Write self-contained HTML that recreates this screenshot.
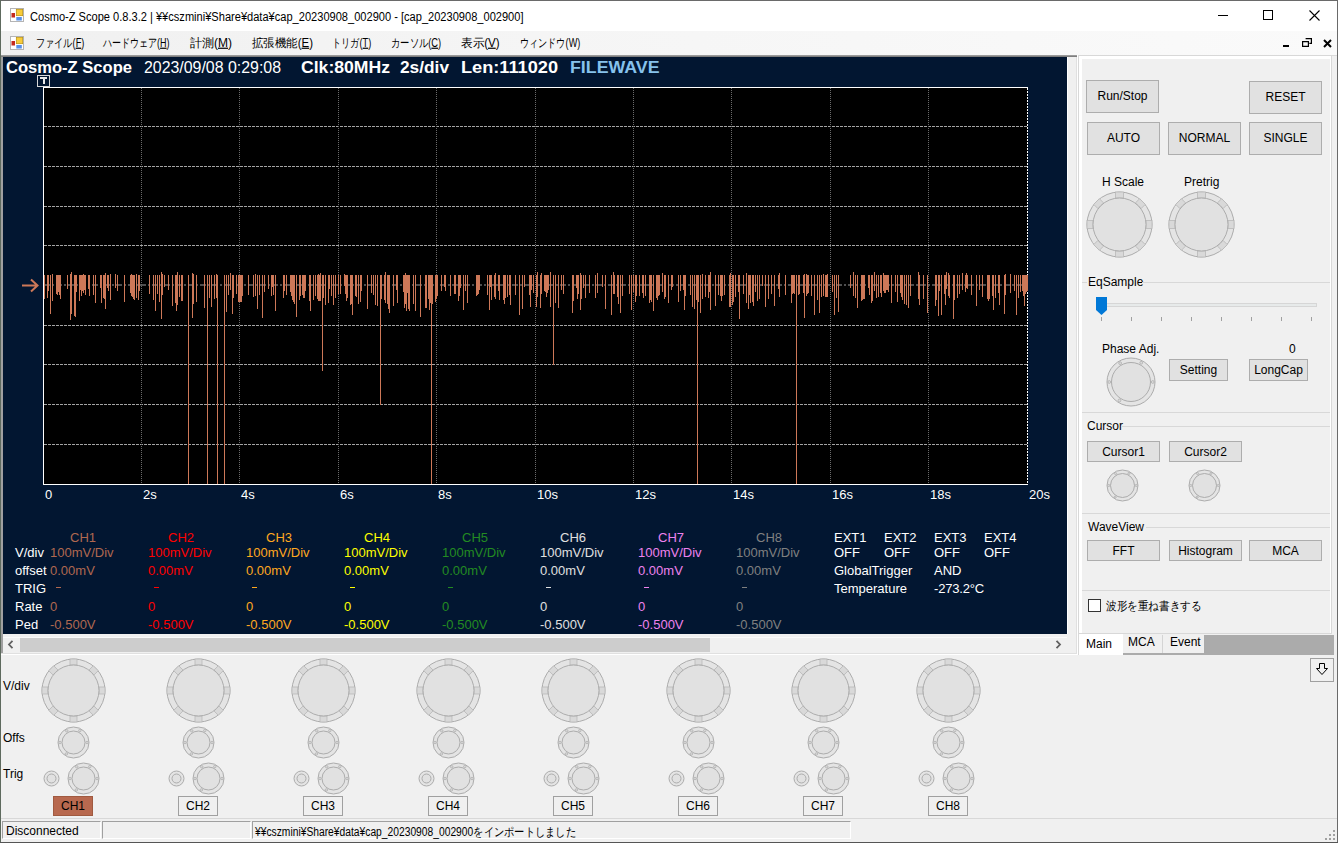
<!DOCTYPE html><html><head><meta charset="utf-8"><style>
*{margin:0;padding:0;box-sizing:border-box}
html,body{width:1338px;height:843px;overflow:hidden;background:#f0f0f0;font-family:"Liberation Sans",sans-serif;position:relative}
.a{position:absolute;white-space:nowrap}
.b{position:absolute;background:#e1e1e1;border:1px solid #adadad}
</style></head><body>
<div class="a" style="left:0;top:0;width:1338px;height:1px;background:#6a6a6a"></div>
<div class="a" style="left:0;top:0;width:1px;height:843px;background:#5e6a5e"></div>
<div class="a" style="left:1337px;top:0;width:1px;height:843px;background:#6a6a6a"></div>
<div class="a" style="left:0;top:842px;width:1338px;height:1px;background:#555"></div>
<div class="a" style="left:1px;top:1px;width:1336px;height:30px;background:#fff"></div>
<svg class="a" style="left:10px;top:8px" width="14" height="14" viewBox="0 0 14 14"><rect x="0.5" y="0.5" width="13" height="13" fill="#fff" stroke="#b4b4b4"/><rect x="6.3" y="1.3" width="6.4" height="6.4" fill="#f8cc3a" stroke="#b8900c" stroke-width="0.7"/><rect x="1.5" y="5" width="3.5" height="4.5" fill="#c42a1e"/><rect x="6.3" y="9" width="5.5" height="3.5" fill="#5690e8"/></svg>
<svg class="a" style="left:30px;top:9px;overflow:visible" width="493.5" height="15"><text x="0" y="11.66" font-family="Liberation Sans, sans-serif" font-size="12" fill="#000" textLength="493.50" lengthAdjust="spacingAndGlyphs">Cosmo-Z Scope 0.8.3.2 | ¥¥cszmini¥Share¥data¥cap_20230908_002900 - [cap_20230908_002900]</text></svg>
<div class="a" style="left:1218px;top:15px;width:10px;height:1px;background:#000"></div>
<div class="a" style="left:1263px;top:10px;width:10px;height:10px;border:1px solid #000"></div>
<svg class="a" style="left:1309px;top:10px" width="11" height="11"><path d="M0.5 0.5L10.5 10.5M10.5 0.5L0.5 10.5" stroke="#000" stroke-width="1.1"/></svg>
<div class="a" style="left:1px;top:31px;width:1336px;height:24px;background:linear-gradient(90deg,#f0f0f0,#f5f5f5 40%,#fafafa)"></div>
<svg class="a" style="left:10px;top:36px" width="14" height="14" viewBox="0 0 14 14"><rect x="0.5" y="0.5" width="13" height="13" fill="#fff" stroke="#b4b4b4"/><rect x="6.3" y="1.3" width="6.4" height="6.4" fill="#f8cc3a" stroke="#b8900c" stroke-width="0.7"/><rect x="1.5" y="5" width="3.5" height="4.5" fill="#c42a1e"/><rect x="6.3" y="9" width="5.5" height="3.5" fill="#5690e8"/></svg>
<svg class="a" style="left:35.6px;top:35px;overflow:visible" width="48.3" height="15"><text x="0" y="11.66" font-family="Liberation Sans, sans-serif" font-size="12" fill="#000" textLength="48.30" lengthAdjust="spacingAndGlyphs">ファイル(<tspan text-decoration="underline">F</tspan>)</text></svg>
<svg class="a" style="left:102.9px;top:35px;overflow:visible" width="66.6" height="15"><text x="0" y="11.66" font-family="Liberation Sans, sans-serif" font-size="12" fill="#000" textLength="66.60" lengthAdjust="spacingAndGlyphs">ハードウェア(<tspan text-decoration="underline">H</tspan>)</text></svg>
<svg class="a" style="left:189.6px;top:35px;overflow:visible" width="42.0" height="15"><text x="0" y="11.66" font-family="Liberation Sans, sans-serif" font-size="12" fill="#000" textLength="42.00" lengthAdjust="spacingAndGlyphs">計測(<tspan text-decoration="underline">M</tspan>)</text></svg>
<svg class="a" style="left:251.5px;top:35px;overflow:visible" width="61.0" height="15"><text x="0" y="11.66" font-family="Liberation Sans, sans-serif" font-size="12" fill="#000" textLength="61.00" lengthAdjust="spacingAndGlyphs">拡張機能(<tspan text-decoration="underline">E</tspan>)</text></svg>
<svg class="a" style="left:332.3px;top:35px;overflow:visible" width="39.3" height="15"><text x="0" y="11.66" font-family="Liberation Sans, sans-serif" font-size="12" fill="#000" textLength="39.30" lengthAdjust="spacingAndGlyphs">トリガ(<tspan text-decoration="underline">T</tspan>)</text></svg>
<svg class="a" style="left:391.3px;top:35px;overflow:visible" width="50.2" height="15"><text x="0" y="11.66" font-family="Liberation Sans, sans-serif" font-size="12" fill="#000" textLength="50.20" lengthAdjust="spacingAndGlyphs">カーソル(<tspan text-decoration="underline">C</tspan>)</text></svg>
<svg class="a" style="left:461.3px;top:35px;overflow:visible" width="38.6" height="15"><text x="0" y="11.66" font-family="Liberation Sans, sans-serif" font-size="12" fill="#000" textLength="38.60" lengthAdjust="spacingAndGlyphs">表示(<tspan text-decoration="underline">V</tspan>)</text></svg>
<svg class="a" style="left:519.6px;top:35px;overflow:visible" width="60.3" height="15"><text x="0" y="11.66" font-family="Liberation Sans, sans-serif" font-size="12" fill="#000" textLength="60.30" lengthAdjust="spacingAndGlyphs">ウィンドウ(W)</text></svg>
<div class="a" style="left:1283px;top:45px;width:6px;height:2px;background:#000"></div>
<svg class="a" style="left:1302px;top:38px" width="10" height="9"><path d="M3.6 0.6H9.4V5.4H7.4M0.6 3.6H6.4V8.4H0.6Z" fill="none" stroke="#000" stroke-width="1.2"/></svg>
<svg class="a" style="left:1323px;top:39px" width="9" height="9"><path d="M1 1L8 8M8 1L1 8" stroke="#000" stroke-width="2"/></svg>
<div class="a" style="left:1px;top:55px;width:1336px;height:1px;background:#dadada"></div>
<div class="a" style="left:1px;top:55px;width:2px;height:599px;background:#a0a0a0"></div>
<div class="a" style="left:1px;top:55px;width:1076px;height:2px;background:linear-gradient(180deg,#a8a8a8,#707070)"></div>
<div class="a" style="left:1067px;top:57px;width:1px;height:577px;background:#fff"></div>
<div class="a" style="left:1076px;top:57px;width:1px;height:597px;background:#e0e0e0"></div>
<div class="a" style="left:1px;top:653px;width:1076px;height:1px;background:#e0e0e0"></div>
<div class="a" style="left:1px;top:654px;width:1077px;height:1px;background:#fff"></div>
<div class="a" style="left:3px;top:57px;width:1064px;height:577px;background:#021631"></div>
<svg class="a" style="left:6px;top:58px;overflow:visible" width="126.0" height="19"><text x="0" y="15.04" font-family="Liberation Sans, sans-serif" font-size="16" font-weight="bold" fill="#fff" textLength="126.00" lengthAdjust="spacingAndGlyphs">Cosmo-Z Scope</text></svg>
<svg class="a" style="left:144px;top:58px;overflow:visible" width="137.0" height="19"><text x="0" y="15.04" font-family="Liberation Sans, sans-serif" font-size="16" fill="#fff" textLength="137.00" lengthAdjust="spacingAndGlyphs">2023/09/08 0:29:08</text></svg>
<svg class="a" style="left:300.5px;top:58px;overflow:visible" width="89.0" height="19"><text x="0" y="15.04" font-family="Liberation Sans, sans-serif" font-size="16" font-weight="bold" fill="#fff" textLength="89.00" lengthAdjust="spacingAndGlyphs">Clk:80MHz</text></svg>
<svg class="a" style="left:400px;top:58px;overflow:visible" width="49.0" height="19"><text x="0" y="15.04" font-family="Liberation Sans, sans-serif" font-size="16" font-weight="bold" fill="#fff" textLength="49.00" lengthAdjust="spacingAndGlyphs">2s/div</text></svg>
<svg class="a" style="left:461px;top:58px;overflow:visible" width="97.0" height="19"><text x="0" y="15.04" font-family="Liberation Sans, sans-serif" font-size="16" font-weight="bold" fill="#fff" textLength="97.00" lengthAdjust="spacingAndGlyphs">Len:111020</text></svg>
<svg class="a" style="left:570px;top:58px;overflow:visible" width="89.5" height="19"><text x="0" y="15.04" font-family="Liberation Sans, sans-serif" font-size="16" font-weight="bold" fill="#86c2ec" textLength="89.50" lengthAdjust="spacingAndGlyphs">FILEWAVE</text></svg>
<div class="a" style="left:37px;top:75px;width:13px;height:12px;border:1px solid #d8d8d8;background:#021631"></div>
<div class="a" style="left:40px;top:77px;width:7px;height:2px;background:#e8e8e8"></div>
<div class="a" style="left:42.5px;top:77px;width:2px;height:7px;background:#e8e8e8"></div>
<svg class="a" style="left:0;top:0" width="1067" height="634"><rect x="43" y="87" width="985" height="398" fill="#000"/><path d="M44 126.5H1027" stroke="#a4a4a4" stroke-width="1" stroke-dasharray="3 1"/><path d="M44 166.5H1027" stroke="#a4a4a4" stroke-width="1" stroke-dasharray="3 1"/><path d="M44 206.5H1027" stroke="#a4a4a4" stroke-width="1" stroke-dasharray="3 1"/><path d="M44 245.5H1027" stroke="#a4a4a4" stroke-width="1" stroke-dasharray="3 1"/><path d="M44 285H1027" stroke="#4e4e4e" stroke-width="2" stroke-dasharray="6 2 2 2"/><path d="M44 325.5H1027" stroke="#a4a4a4" stroke-width="1" stroke-dasharray="3 1"/><path d="M44 364.5H1027" stroke="#a4a4a4" stroke-width="1" stroke-dasharray="3 1"/><path d="M44 404.5H1027" stroke="#a4a4a4" stroke-width="1" stroke-dasharray="3 1"/><path d="M44 444.5H1027" stroke="#a4a4a4" stroke-width="1" stroke-dasharray="3 1"/><path d="M141.5 88V484" stroke="#6a6a6a" stroke-width="1" stroke-dasharray="1 1"/><path d="M239.5 88V484" stroke="#6a6a6a" stroke-width="1" stroke-dasharray="1 1"/><path d="M338.5 88V484" stroke="#6a6a6a" stroke-width="1" stroke-dasharray="1 1"/><path d="M436.5 88V484" stroke="#6a6a6a" stroke-width="1" stroke-dasharray="1 1"/><path d="M535.5 88V484" stroke="#6a6a6a" stroke-width="1" stroke-dasharray="1 1"/><path d="M633.5 88V484" stroke="#6a6a6a" stroke-width="1" stroke-dasharray="1 1"/><path d="M731.5 88V484" stroke="#6a6a6a" stroke-width="1" stroke-dasharray="1 1"/><path d="M830.5 88V484" stroke="#6a6a6a" stroke-width="1" stroke-dasharray="1 1"/><path d="M928.5 88V484" stroke="#6a6a6a" stroke-width="1" stroke-dasharray="1 1"/><path d="M1027.5 88V485" stroke="#ffffff" stroke-width="1" stroke-dasharray="2 1"/><path d="M43 87.5H1028M43.5 87V485M43 484.5H1028" stroke="#fff" stroke-width="1"/><path d="M44.5 275V299M47.5 275V298M48.5 275V291M50.5 275V314M52.5 274V301M56.5 275V294M57.5 275V295M58.5 275V292M59.5 275V295M60.5 275V299M67.5 275V289M70.5 274V320M71.5 272V314M74.5 275V316M75.5 275V317M76.5 275V292M79.5 275V301M80.5 275V290M81.5 275V296M82.5 275V291M83.5 274V293M84.5 275V290M85.5 275V295M88.5 275V289M89.5 275V296M93.5 275V295M95.5 275V303M100.5 275V288M101.5 275V303M103.5 275V298M104.5 275V299M105.5 273V309M107.5 275V288M108.5 275V291M110.5 274V300M115.5 274V288M117.5 275V291M124.5 275V302M130.5 275V293M131.5 274V296M132.5 275V297M133.5 275V299M134.5 275V300M136.5 274V298M138.5 275V300M139.5 275V291M149.5 275V294M153.5 275V300M155.5 275V311M157.5 275V294M159.5 275V302M161.5 272V319M162.5 274V295M164.5 275V287M168.5 275V290M172.5 275V306M175.5 275V303M176.5 275V311M177.5 272V305M179.5 275V297M181.5 275V301M182.5 275V301M188.5 275V484M192.5 273V318M193.5 274V304M196.5 275V302M204.5 275V308M207.5 275V484M209.5 275V298M211.5 275V307M214.5 275V299M216.5 274V298M217.5 275V484M224.5 275V484M226.5 275V312M228.5 275V295M230.5 273V290M232.5 275V314M233.5 275V298M236.5 275V294M238.5 275V302M239.5 275V302M240.5 275V302M241.5 275V302M242.5 275V296M248.5 275V295M253.5 275V297M255.5 274V296M257.5 275V309M259.5 275V295M262.5 275V318M264.5 275V292M268.5 275V289M271.5 275V296M272.5 275V287M273.5 275V295M275.5 275V311M283.5 275V298M284.5 275V291M286.5 275V295M290.5 275V292M291.5 275V296M292.5 275V300M293.5 275V302M294.5 275V304M296.5 275V317M299.5 275V300M300.5 275V296M302.5 275V295M303.5 275V298M304.5 275V298M305.5 275V291M309.5 275V301M310.5 275V311M313.5 275V300M315.5 275V296M317.5 275V299M318.5 274V301M319.5 275V301M320.5 273V301M322.5 275V371M323.5 275V298M325.5 275V305M328.5 275V303M329.5 275V289M331.5 275V296M333.5 275V305M335.5 275V298M338.5 275V294M340.5 275V294M344.5 274V286M345.5 275V294M346.5 275V301M347.5 275V298M350.5 275V305M351.5 275V304M352.5 275V315M355.5 275V296M356.5 275V297M358.5 275V304M360.5 275V302M361.5 275V291M367.5 275V309M371.5 275V293M373.5 275V295M375.5 275V305M377.5 275V306M380.5 275V405M381.5 275V299M384.5 275V300M385.5 272V303M387.5 275V304M388.5 275V309M389.5 275V313M393.5 275V306M396.5 275V290M397.5 275V303M403.5 275V292M404.5 275V308M405.5 273V304M406.5 275V311M407.5 275V293M408.5 275V309M409.5 275V311M413.5 275V304M415.5 275V311M420.5 275V317M425.5 275V308M426.5 275V308M428.5 275V299M429.5 275V310M430.5 275V303M431.5 275V484M432.5 275V304M435.5 275V302M436.5 275V299M437.5 275V296M441.5 275V291M444.5 275V287M445.5 275V291M450.5 275V296M454.5 275V294M455.5 275V294M458.5 275V301M459.5 275V296M460.5 275V288M463.5 275V310M465.5 275V291M467.5 275V303M476.5 275V296M477.5 275V295M478.5 275V294M479.5 275V290M487.5 275V295M489.5 275V310M490.5 275V287M491.5 275V300M494.5 275V297M495.5 273V299M498.5 275V291M499.5 275V300M503.5 275V300M504.5 275V304M505.5 275V298M507.5 275V297M509.5 275V295M510.5 275V305M515.5 275V295M519.5 275V315M522.5 275V309M524.5 275V287M529.5 275V295M530.5 275V307M531.5 275V290M533.5 275V293M536.5 275V307M537.5 272V297M540.5 275V308M541.5 273V294M544.5 275V291M545.5 275V292M546.5 275V297M547.5 275V293M548.5 275V290M550.5 272V307M553.5 275V365M555.5 275V303M558.5 275V308M561.5 275V290M563.5 275V294M572.5 275V313M573.5 275V301M576.5 275V288M577.5 275V299M578.5 275V294M580.5 273V310M581.5 275V299M583.5 275V288M585.5 275V298M589.5 275V293M595.5 275V298M597.5 273V293M602.5 275V287M605.5 275V309M611.5 275V315M613.5 272V294M614.5 275V294M617.5 275V297M618.5 275V304M620.5 275V313M622.5 275V296M629.5 275V294M631.5 275V310M633.5 275V292M635.5 275V302M636.5 275V296M639.5 275V296M642.5 275V293M643.5 275V298M645.5 275V296M649.5 275V303M650.5 275V300M651.5 275V302M653.5 275V311M656.5 275V298M657.5 275V300M658.5 275V296M659.5 275V295M662.5 273V292M664.5 275V299M665.5 275V297M668.5 275V303M671.5 275V290M672.5 275V287M678.5 275V302M680.5 275V291M683.5 275V290M684.5 275V310M685.5 275V296M690.5 275V295M692.5 275V307M694.5 275V309M696.5 275V300M697.5 275V484M698.5 275V302M700.5 275V313M702.5 274V299M705.5 275V297M708.5 275V298M709.5 275V292M710.5 272V310M715.5 275V306M718.5 275V295M720.5 275V296M721.5 275V301M722.5 275V296M724.5 275V295M729.5 275V307M730.5 273V307M732.5 275V305M733.5 275V302M735.5 275V297M738.5 275V292M739.5 275V319M743.5 275V294M746.5 273V303M748.5 275V309M749.5 275V295M750.5 275V303M752.5 275V302M753.5 275V306M755.5 275V292M757.5 275V301M759.5 275V299M762.5 275V286M765.5 275V307M768.5 275V299M771.5 275V294M774.5 275V306M778.5 275V289M779.5 273V297M785.5 275V295M791.5 275V303M792.5 275V294M793.5 275V293M794.5 275V294M796.5 275V484M798.5 275V295M799.5 275V294M803.5 275V293M804.5 274V318M806.5 274V296M807.5 275V294M808.5 275V293M811.5 275V296M814.5 275V315M817.5 275V300M819.5 275V313M821.5 275V297M823.5 274V296M825.5 275V297M826.5 275V297M827.5 274V297M832.5 275V292M834.5 275V315M836.5 275V298M838.5 275V312M850.5 275V288M853.5 272V296M855.5 275V298M857.5 275V308M861.5 275V301M862.5 275V300M863.5 275V299M864.5 275V299M868.5 275V288M869.5 275V295M871.5 275V303M872.5 275V301M874.5 272V291M876.5 275V298M878.5 275V297M880.5 275V293M881.5 275V297M883.5 273V291M884.5 275V293M885.5 275V293M886.5 275V290M887.5 275V290M888.5 275V292M891.5 275V303M895.5 275V292M897.5 275V302M900.5 275V293M901.5 275V297M902.5 275V300M904.5 275V304M906.5 275V305M908.5 275V308M910.5 275V296M918.5 272V299M919.5 275V305M923.5 275V299M927.5 275V313M935.5 275V306M936.5 275V300M938.5 275V316M939.5 275V291M941.5 275V315M944.5 275V294M945.5 275V305M946.5 272V289M948.5 273V296M949.5 275V298M953.5 275V319M954.5 275V300M957.5 275V298M959.5 275V294M962.5 273V290M965.5 275V292M966.5 273V288M967.5 275V289M971.5 275V295M976.5 275V306M979.5 275V290M982.5 275V297M987.5 275V299M988.5 275V301M989.5 275V299M992.5 275V296M993.5 275V310M995.5 275V298M998.5 275V293M999.5 275V305M1004.5 275V314M1005.5 274V295M1010.5 274V293M1014.5 275V291M1016.5 275V315M1018.5 275V298M1020.5 275V292M1022.5 275V291M1023.5 275V296M1024.5 275V306M1025.5 275V294M1026.5 275V292M1027.5 275V291" stroke="#cd7858" stroke-width="1"/><path d="M22 285.5H37M31 279.5L37.5 285.5L31 291.5" fill="none" stroke="#cd7858" stroke-width="2"/></svg>
<div class="a" style="left:45px;top:487px;font-size:13px;line-height:16px;color:#fff;line-height:16px;">0</div>
<div class="a" style="left:143px;top:487px;font-size:13px;line-height:16px;color:#fff;line-height:16px;">2s</div>
<div class="a" style="left:241px;top:487px;font-size:13px;line-height:16px;color:#fff;line-height:16px;">4s</div>
<div class="a" style="left:340px;top:487px;font-size:13px;line-height:16px;color:#fff;line-height:16px;">6s</div>
<div class="a" style="left:438px;top:487px;font-size:13px;line-height:16px;color:#fff;line-height:16px;">8s</div>
<div class="a" style="left:537px;top:487px;font-size:13px;line-height:16px;color:#fff;line-height:16px;">10s</div>
<div class="a" style="left:635px;top:487px;font-size:13px;line-height:16px;color:#fff;line-height:16px;">12s</div>
<div class="a" style="left:733px;top:487px;font-size:13px;line-height:16px;color:#fff;line-height:16px;">14s</div>
<div class="a" style="left:832px;top:487px;font-size:13px;line-height:16px;color:#fff;line-height:16px;">16s</div>
<div class="a" style="left:930px;top:487px;font-size:13px;line-height:16px;color:#fff;line-height:16px;">18s</div>
<div class="a" style="left:1029px;top:487px;font-size:13px;line-height:16px;color:#fff;line-height:16px;">20s</div>
<div class="a" style="left:70px;top:530px;font-size:13px;line-height:16px;color:#b06850;line-height:16px;">CH1</div>
<div class="a" style="left:50px;top:545px;font-size:13px;line-height:16px;color:#b06850;line-height:16px;">100mV/Div</div>
<div class="a" style="left:50px;top:563px;font-size:13px;line-height:16px;color:#b06850;line-height:16px;">0.00mV</div>
<div class="a" style="left:56px;top:587px;width:5px;height:1px;background:#b06850"></div>
<div class="a" style="left:50px;top:599px;font-size:13px;line-height:16px;color:#b06850;line-height:16px;">0</div>
<div class="a" style="left:50px;top:617px;font-size:13px;line-height:16px;color:#b06850;line-height:16px;">-0.500V</div>
<div class="a" style="left:168px;top:530px;font-size:13px;line-height:16px;color:#ff0000;line-height:16px;">CH2</div>
<div class="a" style="left:148px;top:545px;font-size:13px;line-height:16px;color:#ff0000;line-height:16px;">100mV/Div</div>
<div class="a" style="left:148px;top:563px;font-size:13px;line-height:16px;color:#ff0000;line-height:16px;">0.00mV</div>
<div class="a" style="left:154px;top:587px;width:5px;height:1px;background:#ff0000"></div>
<div class="a" style="left:148px;top:599px;font-size:13px;line-height:16px;color:#ff0000;line-height:16px;">0</div>
<div class="a" style="left:148px;top:617px;font-size:13px;line-height:16px;color:#ff0000;line-height:16px;">-0.500V</div>
<div class="a" style="left:266px;top:530px;font-size:13px;line-height:16px;color:#ffa820;line-height:16px;">CH3</div>
<div class="a" style="left:246px;top:545px;font-size:13px;line-height:16px;color:#ffa820;line-height:16px;">100mV/Div</div>
<div class="a" style="left:246px;top:563px;font-size:13px;line-height:16px;color:#ffa820;line-height:16px;">0.00mV</div>
<div class="a" style="left:252px;top:587px;width:5px;height:1px;background:#ffa820"></div>
<div class="a" style="left:246px;top:599px;font-size:13px;line-height:16px;color:#ffa820;line-height:16px;">0</div>
<div class="a" style="left:246px;top:617px;font-size:13px;line-height:16px;color:#ffa820;line-height:16px;">-0.500V</div>
<div class="a" style="left:364px;top:530px;font-size:13px;line-height:16px;color:#ffff00;line-height:16px;">CH4</div>
<div class="a" style="left:344px;top:545px;font-size:13px;line-height:16px;color:#ffff00;line-height:16px;">100mV/Div</div>
<div class="a" style="left:344px;top:563px;font-size:13px;line-height:16px;color:#ffff00;line-height:16px;">0.00mV</div>
<div class="a" style="left:350px;top:587px;width:5px;height:1px;background:#ffff00"></div>
<div class="a" style="left:344px;top:599px;font-size:13px;line-height:16px;color:#ffff00;line-height:16px;">0</div>
<div class="a" style="left:344px;top:617px;font-size:13px;line-height:16px;color:#ffff00;line-height:16px;">-0.500V</div>
<div class="a" style="left:462px;top:530px;font-size:13px;line-height:16px;color:#228b22;line-height:16px;">CH5</div>
<div class="a" style="left:442px;top:545px;font-size:13px;line-height:16px;color:#228b22;line-height:16px;">100mV/Div</div>
<div class="a" style="left:442px;top:563px;font-size:13px;line-height:16px;color:#228b22;line-height:16px;">0.00mV</div>
<div class="a" style="left:448px;top:587px;width:5px;height:1px;background:#228b22"></div>
<div class="a" style="left:442px;top:599px;font-size:13px;line-height:16px;color:#228b22;line-height:16px;">0</div>
<div class="a" style="left:442px;top:617px;font-size:13px;line-height:16px;color:#228b22;line-height:16px;">-0.500V</div>
<div class="a" style="left:560px;top:530px;font-size:13px;line-height:16px;color:#e0e0e0;line-height:16px;">CH6</div>
<div class="a" style="left:540px;top:545px;font-size:13px;line-height:16px;color:#e0e0e0;line-height:16px;">100mV/Div</div>
<div class="a" style="left:540px;top:563px;font-size:13px;line-height:16px;color:#e0e0e0;line-height:16px;">0.00mV</div>
<div class="a" style="left:546px;top:587px;width:5px;height:1px;background:#e0e0e0"></div>
<div class="a" style="left:540px;top:599px;font-size:13px;line-height:16px;color:#e0e0e0;line-height:16px;">0</div>
<div class="a" style="left:540px;top:617px;font-size:13px;line-height:16px;color:#e0e0e0;line-height:16px;">-0.500V</div>
<div class="a" style="left:658px;top:530px;font-size:13px;line-height:16px;color:#ee82ee;line-height:16px;">CH7</div>
<div class="a" style="left:638px;top:545px;font-size:13px;line-height:16px;color:#ee82ee;line-height:16px;">100mV/Div</div>
<div class="a" style="left:638px;top:563px;font-size:13px;line-height:16px;color:#ee82ee;line-height:16px;">0.00mV</div>
<div class="a" style="left:644px;top:587px;width:5px;height:1px;background:#ee82ee"></div>
<div class="a" style="left:638px;top:599px;font-size:13px;line-height:16px;color:#ee82ee;line-height:16px;">0</div>
<div class="a" style="left:638px;top:617px;font-size:13px;line-height:16px;color:#ee82ee;line-height:16px;">-0.500V</div>
<div class="a" style="left:756px;top:530px;font-size:13px;line-height:16px;color:#808080;line-height:16px;">CH8</div>
<div class="a" style="left:736px;top:545px;font-size:13px;line-height:16px;color:#808080;line-height:16px;">100mV/Div</div>
<div class="a" style="left:736px;top:563px;font-size:13px;line-height:16px;color:#808080;line-height:16px;">0.00mV</div>
<div class="a" style="left:742px;top:587px;width:5px;height:1px;background:#808080"></div>
<div class="a" style="left:736px;top:599px;font-size:13px;line-height:16px;color:#808080;line-height:16px;">0</div>
<div class="a" style="left:736px;top:617px;font-size:13px;line-height:16px;color:#808080;line-height:16px;">-0.500V</div>
<div class="a" style="left:15px;top:545px;font-size:13px;line-height:16px;color:#fff;line-height:16px;">V/div</div>
<div class="a" style="left:15px;top:563px;font-size:13px;line-height:16px;color:#fff;line-height:16px;">offset</div>
<div class="a" style="left:15px;top:581px;font-size:13px;line-height:16px;color:#fff;line-height:16px;">TRIG</div>
<div class="a" style="left:15px;top:599px;font-size:13px;line-height:16px;color:#fff;line-height:16px;">Rate</div>
<div class="a" style="left:15px;top:617px;font-size:13px;line-height:16px;color:#fff;line-height:16px;">Ped</div>
<div class="a" style="left:834px;top:530px;font-size:13px;line-height:16px;color:#fff;line-height:16px;">EXT1</div>
<div class="a" style="left:834px;top:545px;font-size:13px;line-height:16px;color:#fff;line-height:16px;">OFF</div>
<div class="a" style="left:884px;top:530px;font-size:13px;line-height:16px;color:#fff;line-height:16px;">EXT2</div>
<div class="a" style="left:884px;top:545px;font-size:13px;line-height:16px;color:#fff;line-height:16px;">OFF</div>
<div class="a" style="left:934px;top:530px;font-size:13px;line-height:16px;color:#fff;line-height:16px;">EXT3</div>
<div class="a" style="left:934px;top:545px;font-size:13px;line-height:16px;color:#fff;line-height:16px;">OFF</div>
<div class="a" style="left:984px;top:530px;font-size:13px;line-height:16px;color:#fff;line-height:16px;">EXT4</div>
<div class="a" style="left:984px;top:545px;font-size:13px;line-height:16px;color:#fff;line-height:16px;">OFF</div>
<div class="a" style="left:834px;top:563px;font-size:13px;line-height:16px;color:#fff;line-height:16px;">GlobalTrigger</div>
<div class="a" style="left:934px;top:563px;font-size:13px;line-height:16px;color:#fff;line-height:16px;">AND</div>
<div class="a" style="left:834px;top:581px;font-size:13px;line-height:16px;color:#fff;line-height:16px;">Temperature</div>
<div class="a" style="left:934px;top:581px;font-size:13px;line-height:16px;color:#fff;line-height:16px;letter-spacing:-0.2px;">-273.2°C</div>
<div class="a" style="left:3px;top:634px;width:1064px;height:19px;background:#f0f0f0"></div>
<div class="a" style="left:3px;top:637px;width:1064px;height:1px;background:#fafafa"></div>
<div class="a" style="left:20px;top:638px;width:690px;height:14px;background:#cdcdcd"></div>
<svg class="a" style="left:7px;top:640px" width="8" height="9"><path d="M5.5 0.8L2 4.5L5.5 8.2" fill="none" stroke="#606060" stroke-width="1.8"/></svg>
<svg class="a" style="left:1054px;top:640px" width="8" height="9"><path d="M2.5 0.8L6 4.5L2.5 8.2" fill="none" stroke="#606060" stroke-width="1.8"/></svg>
<div class="a" style="left:1077px;top:55px;width:1px;height:600px;background:#fff"></div>
<div class="a" style="left:1078px;top:55px;width:254px;height:600px;background:#d8d8d8"></div>
<div class="a" style="left:1079px;top:56px;width:252px;height:578px;background:#fff"></div>
<div class="a" style="left:1082px;top:59px;width:248px;height:574px;background:#f0f0f0"></div>
<div class="a" style="left:1079px;top:633px;width:252px;height:1px;background:#d8d8d8"></div>
<div class="a" style="left:1079px;top:634px;width:253px;height:21px;background:#f0f0f0"></div>
<div class="b" style="left:1086px;top:80px;width:73px;height:33px;background:#e1e1e1;border-color:#adadad"></div>
<div class="a" style="left:1086px;top:79px;width:73px;height:33px;display:flex;align-items:center;justify-content:center;font-size:12px;color:#000">Run/Stop</div>
<div class="b" style="left:1249px;top:81px;width:73px;height:33px;background:#e1e1e1;border-color:#adadad"></div>
<div class="a" style="left:1249px;top:80px;width:73px;height:33px;display:flex;align-items:center;justify-content:center;font-size:12px;color:#000">RESET</div>
<div class="b" style="left:1087px;top:122px;width:73px;height:33px;background:#e1e1e1;border-color:#adadad"></div>
<div class="a" style="left:1087px;top:121px;width:73px;height:33px;display:flex;align-items:center;justify-content:center;font-size:12px;color:#000">AUTO</div>
<div class="b" style="left:1168px;top:122px;width:73px;height:33px;background:#e1e1e1;border-color:#adadad"></div>
<div class="a" style="left:1168px;top:121px;width:73px;height:33px;display:flex;align-items:center;justify-content:center;font-size:12px;color:#000">NORMAL</div>
<div class="b" style="left:1249px;top:122px;width:73px;height:33px;background:#e1e1e1;border-color:#adadad"></div>
<div class="a" style="left:1249px;top:121px;width:73px;height:33px;display:flex;align-items:center;justify-content:center;font-size:12px;color:#000">SINGLE</div>
<div class="a" style="left:1102px;top:175px;font-size:12px;line-height:15px;color:#000;">H Scale</div>
<div class="a" style="left:1184px;top:175px;font-size:12px;line-height:15px;color:#000;">Pretrig</div>
<svg class="a" style="left:1085.0px;top:190.0px" width="69.0" height="69.0" viewBox="-34.5 -34.5 69.0 69.0"><circle r="32.5" fill="#e4e4e4" stroke="#acacac" stroke-width="1"/><rect x="-4.0" y="-3" width="8" height="6" fill="#d9d9d9" stroke="#b8b8b8" stroke-width="0.8" transform="translate(29.50 0.00) rotate(90)"/><rect x="-4.0" y="-3" width="8" height="6" fill="#d9d9d9" stroke="#b8b8b8" stroke-width="0.8" transform="translate(20.86 20.86) rotate(135)"/><rect x="-4.0" y="-3" width="8" height="6" fill="#d9d9d9" stroke="#b8b8b8" stroke-width="0.8" transform="translate(0.00 29.50) rotate(180)"/><rect x="-4.0" y="-3" width="8" height="6" fill="#d9d9d9" stroke="#b8b8b8" stroke-width="0.8" transform="translate(-20.86 20.86) rotate(225)"/><rect x="-4.0" y="-3" width="8" height="6" fill="#d9d9d9" stroke="#b8b8b8" stroke-width="0.8" transform="translate(-29.50 0.00) rotate(270)"/><rect x="-4.0" y="-3" width="8" height="6" fill="#d9d9d9" stroke="#b8b8b8" stroke-width="0.8" transform="translate(-20.86 -20.86) rotate(315)"/><rect x="-4.0" y="-3" width="8" height="6" fill="#d9d9d9" stroke="#b8b8b8" stroke-width="0.8" transform="translate(-0.00 -29.50) rotate(360)"/><rect x="-4.0" y="-3" width="8" height="6" fill="#d9d9d9" stroke="#b8b8b8" stroke-width="0.8" transform="translate(20.86 -20.86) rotate(405)"/><circle r="26.5" fill="#e1e1e1" stroke="#acacac" stroke-width="1"/></svg>
<svg class="a" style="left:1167.0px;top:190.0px" width="69.0" height="69.0" viewBox="-34.5 -34.5 69.0 69.0"><circle r="32.5" fill="#e4e4e4" stroke="#acacac" stroke-width="1"/><rect x="-4.0" y="-3" width="8" height="6" fill="#d9d9d9" stroke="#b8b8b8" stroke-width="0.8" transform="translate(29.50 0.00) rotate(90)"/><rect x="-4.0" y="-3" width="8" height="6" fill="#d9d9d9" stroke="#b8b8b8" stroke-width="0.8" transform="translate(20.86 20.86) rotate(135)"/><rect x="-4.0" y="-3" width="8" height="6" fill="#d9d9d9" stroke="#b8b8b8" stroke-width="0.8" transform="translate(0.00 29.50) rotate(180)"/><rect x="-4.0" y="-3" width="8" height="6" fill="#d9d9d9" stroke="#b8b8b8" stroke-width="0.8" transform="translate(-20.86 20.86) rotate(225)"/><rect x="-4.0" y="-3" width="8" height="6" fill="#d9d9d9" stroke="#b8b8b8" stroke-width="0.8" transform="translate(-29.50 0.00) rotate(270)"/><rect x="-4.0" y="-3" width="8" height="6" fill="#d9d9d9" stroke="#b8b8b8" stroke-width="0.8" transform="translate(-20.86 -20.86) rotate(315)"/><rect x="-4.0" y="-3" width="8" height="6" fill="#d9d9d9" stroke="#b8b8b8" stroke-width="0.8" transform="translate(-0.00 -29.50) rotate(360)"/><rect x="-4.0" y="-3" width="8" height="6" fill="#d9d9d9" stroke="#b8b8b8" stroke-width="0.8" transform="translate(20.86 -20.86) rotate(405)"/><circle r="26.5" fill="#e1e1e1" stroke="#acacac" stroke-width="1"/></svg>
<div class="a" style="left:1088px;top:275px;font-size:12px;line-height:15px;color:#000;">EqSample</div>
<div class="a" style="left:1082px;top:282px;width:5px;height:1px;background:#d8d8d8"></div>
<div class="a" style="left:1142px;top:282px;width:188px;height:1px;background:#d8d8d8"></div>
<div class="a" style="left:1101px;top:303px;width:216px;height:4px;background:#e7eaea;border:1px solid #d6d6d6"></div>
<svg class="a" style="left:1096px;top:297px" width="12" height="19"><path d="M0 0H11V13L5.5 18L0 13Z" fill="#0078d7"/></svg>
<div class="a" style="left:1101px;top:317px;width:1px;height:4px;background:#a0a0a0"></div>
<div class="a" style="left:1131px;top:317px;width:1px;height:4px;background:#a0a0a0"></div>
<div class="a" style="left:1161px;top:317px;width:1px;height:4px;background:#a0a0a0"></div>
<div class="a" style="left:1191px;top:317px;width:1px;height:4px;background:#a0a0a0"></div>
<div class="a" style="left:1221px;top:317px;width:1px;height:4px;background:#a0a0a0"></div>
<div class="a" style="left:1251px;top:317px;width:1px;height:4px;background:#a0a0a0"></div>
<div class="a" style="left:1281px;top:317px;width:1px;height:4px;background:#a0a0a0"></div>
<div class="a" style="left:1311px;top:317px;width:1px;height:4px;background:#a0a0a0"></div>
<div class="a" style="left:1102px;top:342px;font-size:12px;line-height:15px;color:#000;">Phase Adj.</div>
<div class="a" style="left:1289px;top:342px;font-size:12px;line-height:15px;color:#000;">0</div>
<svg class="a" style="left:1105px;top:356px" width="52" height="52" viewBox="-26 -26 52 52"><circle r="24" fill="#e4e4e4" stroke="#acacac" stroke-width="1"/><circle r="19.5" fill="#e1e1e1" stroke="#acacac" stroke-width="1"/><circle cx="-10.87" cy="-18.84" r="1.41" fill="#dadada" stroke="#b0b0b0" stroke-width="0.8"/><circle cx="10.21" cy="-19.20" r="1.41" fill="#dadada" stroke="#b0b0b0" stroke-width="0.8"/><circle cx="21.75" cy="0.00" r="1.41" fill="#dadada" stroke="#b0b0b0" stroke-width="0.8"/><circle cx="-11.53" cy="18.45" r="1.41" fill="#dadada" stroke="#b0b0b0" stroke-width="0.8"/><circle cx="-21.75" cy="0.00" r="1.41" fill="#dadada" stroke="#b0b0b0" stroke-width="0.8"/></svg>
<div class="b" style="left:1169px;top:359px;width:59px;height:22px;background:#e1e1e1;border-color:#adadad"></div>
<div class="a" style="left:1169px;top:359px;width:59px;height:22px;display:flex;align-items:center;justify-content:center;font-size:12px;color:#000">Setting</div>
<div class="b" style="left:1249px;top:359px;width:59px;height:22px;background:#e1e1e1;border-color:#adadad"></div>
<div class="a" style="left:1249px;top:359px;width:59px;height:22px;display:flex;align-items:center;justify-content:center;font-size:12px;color:#000">LongCap</div>
<div class="a" style="left:1082px;top:412px;width:248px;height:1px;background:#d8d8d8"></div>
<div class="a" style="left:1087px;top:419px;font-size:12px;line-height:15px;color:#000;">Cursor</div>
<div class="a" style="left:1122px;top:426px;width:208px;height:1px;background:#d8d8d8"></div>
<div class="b" style="left:1087px;top:441px;width:73px;height:21px;background:#e1e1e1;border-color:#adadad"></div>
<div class="a" style="left:1087px;top:441px;width:73px;height:21px;display:flex;align-items:center;justify-content:center;font-size:12px;color:#000">Cursor1</div>
<div class="b" style="left:1169px;top:441px;width:73px;height:21px;background:#e1e1e1;border-color:#adadad"></div>
<div class="a" style="left:1169px;top:441px;width:73px;height:21px;display:flex;align-items:center;justify-content:center;font-size:12px;color:#000">Cursor2</div>
<svg class="a" style="left:1105.0px;top:467.5px" width="35.0" height="35.0" viewBox="-17.5 -17.5 35.0 35.0"><circle r="15.5" fill="#e4e4e4" stroke="#acacac" stroke-width="1"/><circle r="12" fill="#e1e1e1" stroke="#acacac" stroke-width="1"/><circle cx="-6.87" cy="-11.91" r="1.09" fill="#dadada" stroke="#b0b0b0" stroke-width="0.8"/><circle cx="6.46" cy="-12.14" r="1.09" fill="#dadada" stroke="#b0b0b0" stroke-width="0.8"/><circle cx="13.75" cy="0.00" r="1.09" fill="#dadada" stroke="#b0b0b0" stroke-width="0.8"/><circle cx="-7.29" cy="11.66" r="1.09" fill="#dadada" stroke="#b0b0b0" stroke-width="0.8"/><circle cx="-13.75" cy="0.00" r="1.09" fill="#dadada" stroke="#b0b0b0" stroke-width="0.8"/></svg>
<svg class="a" style="left:1187.0px;top:467.5px" width="35.0" height="35.0" viewBox="-17.5 -17.5 35.0 35.0"><circle r="15.5" fill="#e4e4e4" stroke="#acacac" stroke-width="1"/><circle r="12" fill="#e1e1e1" stroke="#acacac" stroke-width="1"/><circle cx="-6.87" cy="-11.91" r="1.09" fill="#dadada" stroke="#b0b0b0" stroke-width="0.8"/><circle cx="6.46" cy="-12.14" r="1.09" fill="#dadada" stroke="#b0b0b0" stroke-width="0.8"/><circle cx="13.75" cy="0.00" r="1.09" fill="#dadada" stroke="#b0b0b0" stroke-width="0.8"/><circle cx="-7.29" cy="11.66" r="1.09" fill="#dadada" stroke="#b0b0b0" stroke-width="0.8"/><circle cx="-13.75" cy="0.00" r="1.09" fill="#dadada" stroke="#b0b0b0" stroke-width="0.8"/></svg>
<div class="a" style="left:1082px;top:513px;width:248px;height:1px;background:#d8d8d8"></div>
<div class="a" style="left:1088px;top:520px;font-size:12px;line-height:15px;color:#000;">WaveView</div>
<div class="a" style="left:1146px;top:527px;width:184px;height:1px;background:#d8d8d8"></div>
<div class="b" style="left:1087px;top:540px;width:73px;height:21px;background:#e1e1e1;border-color:#adadad"></div>
<div class="a" style="left:1087px;top:540px;width:73px;height:21px;display:flex;align-items:center;justify-content:center;font-size:12px;color:#000">FFT</div>
<div class="b" style="left:1169px;top:540px;width:73px;height:21px;background:#e1e1e1;border-color:#adadad"></div>
<div class="a" style="left:1169px;top:540px;width:73px;height:21px;display:flex;align-items:center;justify-content:center;font-size:12px;color:#000">Histogram</div>
<div class="b" style="left:1249px;top:540px;width:73px;height:21px;background:#e1e1e1;border-color:#adadad"></div>
<div class="a" style="left:1249px;top:540px;width:73px;height:21px;display:flex;align-items:center;justify-content:center;font-size:12px;color:#000">MCA</div>
<div class="a" style="left:1082px;top:590px;width:248px;height:1px;background:#d8d8d8"></div>
<div class="a" style="left:1088px;top:599px;width:13px;height:13px;border:1px solid #333;background:#fff"></div>
<svg class="a" style="left:1105.5px;top:598px;overflow:visible" width="95.5" height="15"><text x="0" y="11.66" font-family="Liberation Sans, sans-serif" font-size="12" fill="#000" textLength="95.50" lengthAdjust="spacingAndGlyphs">波形を重ね書きする</text></svg>
<div class="a" style="left:1123px;top:635px;width:211px;height:20px;background:#ababab"></div>
<div class="a" style="left:1123px;top:635px;width:40px;height:18px;background:#f0f0f0;border-right:1px solid #d4d4d4"></div>
<div class="a" style="left:1163px;top:635px;width:41px;height:18px;background:#f0f0f0"></div>
<div class="a" style="left:1079px;top:634px;width:44px;height:21px;background:#fff"></div>
<div class="a" style="left:1086px;top:637px;font-size:12px;line-height:15px;color:#000;">Main</div>
<div class="a" style="left:1128px;top:635px;font-size:12px;line-height:15px;color:#000;">MCA</div>
<div class="a" style="left:1170px;top:635px;font-size:12px;line-height:15px;color:#000;">Event</div>
<div class="a" style="left:1310px;top:658px;width:24px;height:24px;border:1px solid #a0a0a0;background:#f0f0f0"></div>
<svg class="a" style="left:1315px;top:662px" width="14" height="14"><path d="M4.5 1.5H9.5V6.5H12.5L7 12.5L1.5 6.5H4.5Z" fill="none" stroke="#000" stroke-width="1"/></svg>
<div class="a" style="left:3px;top:679px;font-size:12px;line-height:15px;color:#000;">V/div</div>
<div class="a" style="left:3px;top:731px;font-size:12px;line-height:15px;color:#000;">Offs</div>
<div class="a" style="left:3px;top:767px;font-size:12px;line-height:15px;color:#000;">Trig</div>
<svg class="a" style="left:39.5px;top:656.5px" width="67.0" height="67.0" viewBox="-33.5 -33.5 67.0 67.0"><circle r="31.5" fill="#e4e4e4" stroke="#acacac" stroke-width="1"/><rect x="-3.5" y="-3" width="7" height="6" fill="#d9d9d9" stroke="#b8b8b8" stroke-width="0.8" transform="translate(28.50 0.00) rotate(90)"/><rect x="-3.5" y="-3" width="7" height="6" fill="#d9d9d9" stroke="#b8b8b8" stroke-width="0.8" transform="translate(20.15 20.15) rotate(135)"/><rect x="-3.5" y="-3" width="7" height="6" fill="#d9d9d9" stroke="#b8b8b8" stroke-width="0.8" transform="translate(0.00 28.50) rotate(180)"/><rect x="-3.5" y="-3" width="7" height="6" fill="#d9d9d9" stroke="#b8b8b8" stroke-width="0.8" transform="translate(-20.15 20.15) rotate(225)"/><rect x="-3.5" y="-3" width="7" height="6" fill="#d9d9d9" stroke="#b8b8b8" stroke-width="0.8" transform="translate(-28.50 0.00) rotate(270)"/><rect x="-3.5" y="-3" width="7" height="6" fill="#d9d9d9" stroke="#b8b8b8" stroke-width="0.8" transform="translate(-20.15 -20.15) rotate(315)"/><rect x="-3.5" y="-3" width="7" height="6" fill="#d9d9d9" stroke="#b8b8b8" stroke-width="0.8" transform="translate(-0.00 -28.50) rotate(360)"/><rect x="-3.5" y="-3" width="7" height="6" fill="#d9d9d9" stroke="#b8b8b8" stroke-width="0.8" transform="translate(20.15 -20.15) rotate(405)"/><circle r="25.5" fill="#e1e1e1" stroke="#acacac" stroke-width="1"/></svg>
<svg class="a" style="left:55.5px;top:724.5px" width="35.0" height="35.0" viewBox="-17.5 -17.5 35.0 35.0"><circle r="15.5" fill="#e4e4e4" stroke="#acacac" stroke-width="1"/><circle r="11.5" fill="#e1e1e1" stroke="#acacac" stroke-width="1"/><circle cx="-6.75" cy="-11.69" r="1.25" fill="#dadada" stroke="#b0b0b0" stroke-width="0.8"/><circle cx="6.34" cy="-11.92" r="1.25" fill="#dadada" stroke="#b0b0b0" stroke-width="0.8"/><circle cx="13.50" cy="0.00" r="1.25" fill="#dadada" stroke="#b0b0b0" stroke-width="0.8"/><circle cx="-7.15" cy="11.45" r="1.25" fill="#dadada" stroke="#b0b0b0" stroke-width="0.8"/><circle cx="-13.50" cy="0.00" r="1.25" fill="#dadada" stroke="#b0b0b0" stroke-width="0.8"/></svg>
<svg class="a" style="left:41.5px;top:768.5px" width="19.0" height="19.0" viewBox="-9.5 -9.5 19.0 19.0"><circle r="7.5" fill="#e4e4e4" stroke="#acacac" stroke-width="1"/><circle r="4.5" fill="#e1e1e1" stroke="#acacac" stroke-width="1"/></svg>
<svg class="a" style="left:65.5px;top:760.5px" width="35.0" height="35.0" viewBox="-17.5 -17.5 35.0 35.0"><circle r="15.5" fill="#e4e4e4" stroke="#acacac" stroke-width="1"/><circle r="11.5" fill="#e1e1e1" stroke="#acacac" stroke-width="1"/><circle cx="-6.75" cy="-11.69" r="1.25" fill="#dadada" stroke="#b0b0b0" stroke-width="0.8"/><circle cx="6.34" cy="-11.92" r="1.25" fill="#dadada" stroke="#b0b0b0" stroke-width="0.8"/><circle cx="13.50" cy="0.00" r="1.25" fill="#dadada" stroke="#b0b0b0" stroke-width="0.8"/><circle cx="-7.15" cy="11.45" r="1.25" fill="#dadada" stroke="#b0b0b0" stroke-width="0.8"/><circle cx="-13.50" cy="0.00" r="1.25" fill="#dadada" stroke="#b0b0b0" stroke-width="0.8"/></svg>
<div class="b" style="left:53px;top:796px;width:40px;height:20px;background:#b8694f;border-color:#a05a40"></div>
<div class="a" style="left:53px;top:796px;width:40px;height:20px;display:flex;align-items:center;justify-content:center;font-size:12px;color:#000">CH1</div>
<svg class="a" style="left:164.5px;top:656.5px" width="67.0" height="67.0" viewBox="-33.5 -33.5 67.0 67.0"><circle r="31.5" fill="#e4e4e4" stroke="#acacac" stroke-width="1"/><rect x="-3.5" y="-3" width="7" height="6" fill="#d9d9d9" stroke="#b8b8b8" stroke-width="0.8" transform="translate(28.50 0.00) rotate(90)"/><rect x="-3.5" y="-3" width="7" height="6" fill="#d9d9d9" stroke="#b8b8b8" stroke-width="0.8" transform="translate(20.15 20.15) rotate(135)"/><rect x="-3.5" y="-3" width="7" height="6" fill="#d9d9d9" stroke="#b8b8b8" stroke-width="0.8" transform="translate(0.00 28.50) rotate(180)"/><rect x="-3.5" y="-3" width="7" height="6" fill="#d9d9d9" stroke="#b8b8b8" stroke-width="0.8" transform="translate(-20.15 20.15) rotate(225)"/><rect x="-3.5" y="-3" width="7" height="6" fill="#d9d9d9" stroke="#b8b8b8" stroke-width="0.8" transform="translate(-28.50 0.00) rotate(270)"/><rect x="-3.5" y="-3" width="7" height="6" fill="#d9d9d9" stroke="#b8b8b8" stroke-width="0.8" transform="translate(-20.15 -20.15) rotate(315)"/><rect x="-3.5" y="-3" width="7" height="6" fill="#d9d9d9" stroke="#b8b8b8" stroke-width="0.8" transform="translate(-0.00 -28.50) rotate(360)"/><rect x="-3.5" y="-3" width="7" height="6" fill="#d9d9d9" stroke="#b8b8b8" stroke-width="0.8" transform="translate(20.15 -20.15) rotate(405)"/><circle r="25.5" fill="#e1e1e1" stroke="#acacac" stroke-width="1"/></svg>
<svg class="a" style="left:180.5px;top:724.5px" width="35.0" height="35.0" viewBox="-17.5 -17.5 35.0 35.0"><circle r="15.5" fill="#e4e4e4" stroke="#acacac" stroke-width="1"/><circle r="11.5" fill="#e1e1e1" stroke="#acacac" stroke-width="1"/><circle cx="-6.75" cy="-11.69" r="1.25" fill="#dadada" stroke="#b0b0b0" stroke-width="0.8"/><circle cx="6.34" cy="-11.92" r="1.25" fill="#dadada" stroke="#b0b0b0" stroke-width="0.8"/><circle cx="13.50" cy="0.00" r="1.25" fill="#dadada" stroke="#b0b0b0" stroke-width="0.8"/><circle cx="-7.15" cy="11.45" r="1.25" fill="#dadada" stroke="#b0b0b0" stroke-width="0.8"/><circle cx="-13.50" cy="0.00" r="1.25" fill="#dadada" stroke="#b0b0b0" stroke-width="0.8"/></svg>
<svg class="a" style="left:166.5px;top:768.5px" width="19.0" height="19.0" viewBox="-9.5 -9.5 19.0 19.0"><circle r="7.5" fill="#e4e4e4" stroke="#acacac" stroke-width="1"/><circle r="4.5" fill="#e1e1e1" stroke="#acacac" stroke-width="1"/></svg>
<svg class="a" style="left:190.5px;top:760.5px" width="35.0" height="35.0" viewBox="-17.5 -17.5 35.0 35.0"><circle r="15.5" fill="#e4e4e4" stroke="#acacac" stroke-width="1"/><circle r="11.5" fill="#e1e1e1" stroke="#acacac" stroke-width="1"/><circle cx="-6.75" cy="-11.69" r="1.25" fill="#dadada" stroke="#b0b0b0" stroke-width="0.8"/><circle cx="6.34" cy="-11.92" r="1.25" fill="#dadada" stroke="#b0b0b0" stroke-width="0.8"/><circle cx="13.50" cy="0.00" r="1.25" fill="#dadada" stroke="#b0b0b0" stroke-width="0.8"/><circle cx="-7.15" cy="11.45" r="1.25" fill="#dadada" stroke="#b0b0b0" stroke-width="0.8"/><circle cx="-13.50" cy="0.00" r="1.25" fill="#dadada" stroke="#b0b0b0" stroke-width="0.8"/></svg>
<div class="b" style="left:178px;top:796px;width:40px;height:20px;background:#f0f0f0;border-color:#a0a0a0"></div>
<div class="a" style="left:178px;top:796px;width:40px;height:20px;display:flex;align-items:center;justify-content:center;font-size:12px;color:#000">CH2</div>
<svg class="a" style="left:289.5px;top:656.5px" width="67.0" height="67.0" viewBox="-33.5 -33.5 67.0 67.0"><circle r="31.5" fill="#e4e4e4" stroke="#acacac" stroke-width="1"/><rect x="-3.5" y="-3" width="7" height="6" fill="#d9d9d9" stroke="#b8b8b8" stroke-width="0.8" transform="translate(28.50 0.00) rotate(90)"/><rect x="-3.5" y="-3" width="7" height="6" fill="#d9d9d9" stroke="#b8b8b8" stroke-width="0.8" transform="translate(20.15 20.15) rotate(135)"/><rect x="-3.5" y="-3" width="7" height="6" fill="#d9d9d9" stroke="#b8b8b8" stroke-width="0.8" transform="translate(0.00 28.50) rotate(180)"/><rect x="-3.5" y="-3" width="7" height="6" fill="#d9d9d9" stroke="#b8b8b8" stroke-width="0.8" transform="translate(-20.15 20.15) rotate(225)"/><rect x="-3.5" y="-3" width="7" height="6" fill="#d9d9d9" stroke="#b8b8b8" stroke-width="0.8" transform="translate(-28.50 0.00) rotate(270)"/><rect x="-3.5" y="-3" width="7" height="6" fill="#d9d9d9" stroke="#b8b8b8" stroke-width="0.8" transform="translate(-20.15 -20.15) rotate(315)"/><rect x="-3.5" y="-3" width="7" height="6" fill="#d9d9d9" stroke="#b8b8b8" stroke-width="0.8" transform="translate(-0.00 -28.50) rotate(360)"/><rect x="-3.5" y="-3" width="7" height="6" fill="#d9d9d9" stroke="#b8b8b8" stroke-width="0.8" transform="translate(20.15 -20.15) rotate(405)"/><circle r="25.5" fill="#e1e1e1" stroke="#acacac" stroke-width="1"/></svg>
<svg class="a" style="left:305.5px;top:724.5px" width="35.0" height="35.0" viewBox="-17.5 -17.5 35.0 35.0"><circle r="15.5" fill="#e4e4e4" stroke="#acacac" stroke-width="1"/><circle r="11.5" fill="#e1e1e1" stroke="#acacac" stroke-width="1"/><circle cx="-6.75" cy="-11.69" r="1.25" fill="#dadada" stroke="#b0b0b0" stroke-width="0.8"/><circle cx="6.34" cy="-11.92" r="1.25" fill="#dadada" stroke="#b0b0b0" stroke-width="0.8"/><circle cx="13.50" cy="0.00" r="1.25" fill="#dadada" stroke="#b0b0b0" stroke-width="0.8"/><circle cx="-7.15" cy="11.45" r="1.25" fill="#dadada" stroke="#b0b0b0" stroke-width="0.8"/><circle cx="-13.50" cy="0.00" r="1.25" fill="#dadada" stroke="#b0b0b0" stroke-width="0.8"/></svg>
<svg class="a" style="left:291.5px;top:768.5px" width="19.0" height="19.0" viewBox="-9.5 -9.5 19.0 19.0"><circle r="7.5" fill="#e4e4e4" stroke="#acacac" stroke-width="1"/><circle r="4.5" fill="#e1e1e1" stroke="#acacac" stroke-width="1"/></svg>
<svg class="a" style="left:315.5px;top:760.5px" width="35.0" height="35.0" viewBox="-17.5 -17.5 35.0 35.0"><circle r="15.5" fill="#e4e4e4" stroke="#acacac" stroke-width="1"/><circle r="11.5" fill="#e1e1e1" stroke="#acacac" stroke-width="1"/><circle cx="-6.75" cy="-11.69" r="1.25" fill="#dadada" stroke="#b0b0b0" stroke-width="0.8"/><circle cx="6.34" cy="-11.92" r="1.25" fill="#dadada" stroke="#b0b0b0" stroke-width="0.8"/><circle cx="13.50" cy="0.00" r="1.25" fill="#dadada" stroke="#b0b0b0" stroke-width="0.8"/><circle cx="-7.15" cy="11.45" r="1.25" fill="#dadada" stroke="#b0b0b0" stroke-width="0.8"/><circle cx="-13.50" cy="0.00" r="1.25" fill="#dadada" stroke="#b0b0b0" stroke-width="0.8"/></svg>
<div class="b" style="left:303px;top:796px;width:40px;height:20px;background:#f0f0f0;border-color:#a0a0a0"></div>
<div class="a" style="left:303px;top:796px;width:40px;height:20px;display:flex;align-items:center;justify-content:center;font-size:12px;color:#000">CH3</div>
<svg class="a" style="left:414.5px;top:656.5px" width="67.0" height="67.0" viewBox="-33.5 -33.5 67.0 67.0"><circle r="31.5" fill="#e4e4e4" stroke="#acacac" stroke-width="1"/><rect x="-3.5" y="-3" width="7" height="6" fill="#d9d9d9" stroke="#b8b8b8" stroke-width="0.8" transform="translate(28.50 0.00) rotate(90)"/><rect x="-3.5" y="-3" width="7" height="6" fill="#d9d9d9" stroke="#b8b8b8" stroke-width="0.8" transform="translate(20.15 20.15) rotate(135)"/><rect x="-3.5" y="-3" width="7" height="6" fill="#d9d9d9" stroke="#b8b8b8" stroke-width="0.8" transform="translate(0.00 28.50) rotate(180)"/><rect x="-3.5" y="-3" width="7" height="6" fill="#d9d9d9" stroke="#b8b8b8" stroke-width="0.8" transform="translate(-20.15 20.15) rotate(225)"/><rect x="-3.5" y="-3" width="7" height="6" fill="#d9d9d9" stroke="#b8b8b8" stroke-width="0.8" transform="translate(-28.50 0.00) rotate(270)"/><rect x="-3.5" y="-3" width="7" height="6" fill="#d9d9d9" stroke="#b8b8b8" stroke-width="0.8" transform="translate(-20.15 -20.15) rotate(315)"/><rect x="-3.5" y="-3" width="7" height="6" fill="#d9d9d9" stroke="#b8b8b8" stroke-width="0.8" transform="translate(-0.00 -28.50) rotate(360)"/><rect x="-3.5" y="-3" width="7" height="6" fill="#d9d9d9" stroke="#b8b8b8" stroke-width="0.8" transform="translate(20.15 -20.15) rotate(405)"/><circle r="25.5" fill="#e1e1e1" stroke="#acacac" stroke-width="1"/></svg>
<svg class="a" style="left:430.5px;top:724.5px" width="35.0" height="35.0" viewBox="-17.5 -17.5 35.0 35.0"><circle r="15.5" fill="#e4e4e4" stroke="#acacac" stroke-width="1"/><circle r="11.5" fill="#e1e1e1" stroke="#acacac" stroke-width="1"/><circle cx="-6.75" cy="-11.69" r="1.25" fill="#dadada" stroke="#b0b0b0" stroke-width="0.8"/><circle cx="6.34" cy="-11.92" r="1.25" fill="#dadada" stroke="#b0b0b0" stroke-width="0.8"/><circle cx="13.50" cy="0.00" r="1.25" fill="#dadada" stroke="#b0b0b0" stroke-width="0.8"/><circle cx="-7.15" cy="11.45" r="1.25" fill="#dadada" stroke="#b0b0b0" stroke-width="0.8"/><circle cx="-13.50" cy="0.00" r="1.25" fill="#dadada" stroke="#b0b0b0" stroke-width="0.8"/></svg>
<svg class="a" style="left:416.5px;top:768.5px" width="19.0" height="19.0" viewBox="-9.5 -9.5 19.0 19.0"><circle r="7.5" fill="#e4e4e4" stroke="#acacac" stroke-width="1"/><circle r="4.5" fill="#e1e1e1" stroke="#acacac" stroke-width="1"/></svg>
<svg class="a" style="left:440.5px;top:760.5px" width="35.0" height="35.0" viewBox="-17.5 -17.5 35.0 35.0"><circle r="15.5" fill="#e4e4e4" stroke="#acacac" stroke-width="1"/><circle r="11.5" fill="#e1e1e1" stroke="#acacac" stroke-width="1"/><circle cx="-6.75" cy="-11.69" r="1.25" fill="#dadada" stroke="#b0b0b0" stroke-width="0.8"/><circle cx="6.34" cy="-11.92" r="1.25" fill="#dadada" stroke="#b0b0b0" stroke-width="0.8"/><circle cx="13.50" cy="0.00" r="1.25" fill="#dadada" stroke="#b0b0b0" stroke-width="0.8"/><circle cx="-7.15" cy="11.45" r="1.25" fill="#dadada" stroke="#b0b0b0" stroke-width="0.8"/><circle cx="-13.50" cy="0.00" r="1.25" fill="#dadada" stroke="#b0b0b0" stroke-width="0.8"/></svg>
<div class="b" style="left:428px;top:796px;width:40px;height:20px;background:#f0f0f0;border-color:#a0a0a0"></div>
<div class="a" style="left:428px;top:796px;width:40px;height:20px;display:flex;align-items:center;justify-content:center;font-size:12px;color:#000">CH4</div>
<svg class="a" style="left:539.5px;top:656.5px" width="67.0" height="67.0" viewBox="-33.5 -33.5 67.0 67.0"><circle r="31.5" fill="#e4e4e4" stroke="#acacac" stroke-width="1"/><rect x="-3.5" y="-3" width="7" height="6" fill="#d9d9d9" stroke="#b8b8b8" stroke-width="0.8" transform="translate(28.50 0.00) rotate(90)"/><rect x="-3.5" y="-3" width="7" height="6" fill="#d9d9d9" stroke="#b8b8b8" stroke-width="0.8" transform="translate(20.15 20.15) rotate(135)"/><rect x="-3.5" y="-3" width="7" height="6" fill="#d9d9d9" stroke="#b8b8b8" stroke-width="0.8" transform="translate(0.00 28.50) rotate(180)"/><rect x="-3.5" y="-3" width="7" height="6" fill="#d9d9d9" stroke="#b8b8b8" stroke-width="0.8" transform="translate(-20.15 20.15) rotate(225)"/><rect x="-3.5" y="-3" width="7" height="6" fill="#d9d9d9" stroke="#b8b8b8" stroke-width="0.8" transform="translate(-28.50 0.00) rotate(270)"/><rect x="-3.5" y="-3" width="7" height="6" fill="#d9d9d9" stroke="#b8b8b8" stroke-width="0.8" transform="translate(-20.15 -20.15) rotate(315)"/><rect x="-3.5" y="-3" width="7" height="6" fill="#d9d9d9" stroke="#b8b8b8" stroke-width="0.8" transform="translate(-0.00 -28.50) rotate(360)"/><rect x="-3.5" y="-3" width="7" height="6" fill="#d9d9d9" stroke="#b8b8b8" stroke-width="0.8" transform="translate(20.15 -20.15) rotate(405)"/><circle r="25.5" fill="#e1e1e1" stroke="#acacac" stroke-width="1"/></svg>
<svg class="a" style="left:555.5px;top:724.5px" width="35.0" height="35.0" viewBox="-17.5 -17.5 35.0 35.0"><circle r="15.5" fill="#e4e4e4" stroke="#acacac" stroke-width="1"/><circle r="11.5" fill="#e1e1e1" stroke="#acacac" stroke-width="1"/><circle cx="-6.75" cy="-11.69" r="1.25" fill="#dadada" stroke="#b0b0b0" stroke-width="0.8"/><circle cx="6.34" cy="-11.92" r="1.25" fill="#dadada" stroke="#b0b0b0" stroke-width="0.8"/><circle cx="13.50" cy="0.00" r="1.25" fill="#dadada" stroke="#b0b0b0" stroke-width="0.8"/><circle cx="-7.15" cy="11.45" r="1.25" fill="#dadada" stroke="#b0b0b0" stroke-width="0.8"/><circle cx="-13.50" cy="0.00" r="1.25" fill="#dadada" stroke="#b0b0b0" stroke-width="0.8"/></svg>
<svg class="a" style="left:541.5px;top:768.5px" width="19.0" height="19.0" viewBox="-9.5 -9.5 19.0 19.0"><circle r="7.5" fill="#e4e4e4" stroke="#acacac" stroke-width="1"/><circle r="4.5" fill="#e1e1e1" stroke="#acacac" stroke-width="1"/></svg>
<svg class="a" style="left:565.5px;top:760.5px" width="35.0" height="35.0" viewBox="-17.5 -17.5 35.0 35.0"><circle r="15.5" fill="#e4e4e4" stroke="#acacac" stroke-width="1"/><circle r="11.5" fill="#e1e1e1" stroke="#acacac" stroke-width="1"/><circle cx="-6.75" cy="-11.69" r="1.25" fill="#dadada" stroke="#b0b0b0" stroke-width="0.8"/><circle cx="6.34" cy="-11.92" r="1.25" fill="#dadada" stroke="#b0b0b0" stroke-width="0.8"/><circle cx="13.50" cy="0.00" r="1.25" fill="#dadada" stroke="#b0b0b0" stroke-width="0.8"/><circle cx="-7.15" cy="11.45" r="1.25" fill="#dadada" stroke="#b0b0b0" stroke-width="0.8"/><circle cx="-13.50" cy="0.00" r="1.25" fill="#dadada" stroke="#b0b0b0" stroke-width="0.8"/></svg>
<div class="b" style="left:553px;top:796px;width:40px;height:20px;background:#f0f0f0;border-color:#a0a0a0"></div>
<div class="a" style="left:553px;top:796px;width:40px;height:20px;display:flex;align-items:center;justify-content:center;font-size:12px;color:#000">CH5</div>
<svg class="a" style="left:664.5px;top:656.5px" width="67.0" height="67.0" viewBox="-33.5 -33.5 67.0 67.0"><circle r="31.5" fill="#e4e4e4" stroke="#acacac" stroke-width="1"/><rect x="-3.5" y="-3" width="7" height="6" fill="#d9d9d9" stroke="#b8b8b8" stroke-width="0.8" transform="translate(28.50 0.00) rotate(90)"/><rect x="-3.5" y="-3" width="7" height="6" fill="#d9d9d9" stroke="#b8b8b8" stroke-width="0.8" transform="translate(20.15 20.15) rotate(135)"/><rect x="-3.5" y="-3" width="7" height="6" fill="#d9d9d9" stroke="#b8b8b8" stroke-width="0.8" transform="translate(0.00 28.50) rotate(180)"/><rect x="-3.5" y="-3" width="7" height="6" fill="#d9d9d9" stroke="#b8b8b8" stroke-width="0.8" transform="translate(-20.15 20.15) rotate(225)"/><rect x="-3.5" y="-3" width="7" height="6" fill="#d9d9d9" stroke="#b8b8b8" stroke-width="0.8" transform="translate(-28.50 0.00) rotate(270)"/><rect x="-3.5" y="-3" width="7" height="6" fill="#d9d9d9" stroke="#b8b8b8" stroke-width="0.8" transform="translate(-20.15 -20.15) rotate(315)"/><rect x="-3.5" y="-3" width="7" height="6" fill="#d9d9d9" stroke="#b8b8b8" stroke-width="0.8" transform="translate(-0.00 -28.50) rotate(360)"/><rect x="-3.5" y="-3" width="7" height="6" fill="#d9d9d9" stroke="#b8b8b8" stroke-width="0.8" transform="translate(20.15 -20.15) rotate(405)"/><circle r="25.5" fill="#e1e1e1" stroke="#acacac" stroke-width="1"/></svg>
<svg class="a" style="left:680.5px;top:724.5px" width="35.0" height="35.0" viewBox="-17.5 -17.5 35.0 35.0"><circle r="15.5" fill="#e4e4e4" stroke="#acacac" stroke-width="1"/><circle r="11.5" fill="#e1e1e1" stroke="#acacac" stroke-width="1"/><circle cx="-6.75" cy="-11.69" r="1.25" fill="#dadada" stroke="#b0b0b0" stroke-width="0.8"/><circle cx="6.34" cy="-11.92" r="1.25" fill="#dadada" stroke="#b0b0b0" stroke-width="0.8"/><circle cx="13.50" cy="0.00" r="1.25" fill="#dadada" stroke="#b0b0b0" stroke-width="0.8"/><circle cx="-7.15" cy="11.45" r="1.25" fill="#dadada" stroke="#b0b0b0" stroke-width="0.8"/><circle cx="-13.50" cy="0.00" r="1.25" fill="#dadada" stroke="#b0b0b0" stroke-width="0.8"/></svg>
<svg class="a" style="left:666.5px;top:768.5px" width="19.0" height="19.0" viewBox="-9.5 -9.5 19.0 19.0"><circle r="7.5" fill="#e4e4e4" stroke="#acacac" stroke-width="1"/><circle r="4.5" fill="#e1e1e1" stroke="#acacac" stroke-width="1"/></svg>
<svg class="a" style="left:690.5px;top:760.5px" width="35.0" height="35.0" viewBox="-17.5 -17.5 35.0 35.0"><circle r="15.5" fill="#e4e4e4" stroke="#acacac" stroke-width="1"/><circle r="11.5" fill="#e1e1e1" stroke="#acacac" stroke-width="1"/><circle cx="-6.75" cy="-11.69" r="1.25" fill="#dadada" stroke="#b0b0b0" stroke-width="0.8"/><circle cx="6.34" cy="-11.92" r="1.25" fill="#dadada" stroke="#b0b0b0" stroke-width="0.8"/><circle cx="13.50" cy="0.00" r="1.25" fill="#dadada" stroke="#b0b0b0" stroke-width="0.8"/><circle cx="-7.15" cy="11.45" r="1.25" fill="#dadada" stroke="#b0b0b0" stroke-width="0.8"/><circle cx="-13.50" cy="0.00" r="1.25" fill="#dadada" stroke="#b0b0b0" stroke-width="0.8"/></svg>
<div class="b" style="left:678px;top:796px;width:40px;height:20px;background:#f0f0f0;border-color:#a0a0a0"></div>
<div class="a" style="left:678px;top:796px;width:40px;height:20px;display:flex;align-items:center;justify-content:center;font-size:12px;color:#000">CH6</div>
<svg class="a" style="left:789.5px;top:656.5px" width="67.0" height="67.0" viewBox="-33.5 -33.5 67.0 67.0"><circle r="31.5" fill="#e4e4e4" stroke="#acacac" stroke-width="1"/><rect x="-3.5" y="-3" width="7" height="6" fill="#d9d9d9" stroke="#b8b8b8" stroke-width="0.8" transform="translate(28.50 0.00) rotate(90)"/><rect x="-3.5" y="-3" width="7" height="6" fill="#d9d9d9" stroke="#b8b8b8" stroke-width="0.8" transform="translate(20.15 20.15) rotate(135)"/><rect x="-3.5" y="-3" width="7" height="6" fill="#d9d9d9" stroke="#b8b8b8" stroke-width="0.8" transform="translate(0.00 28.50) rotate(180)"/><rect x="-3.5" y="-3" width="7" height="6" fill="#d9d9d9" stroke="#b8b8b8" stroke-width="0.8" transform="translate(-20.15 20.15) rotate(225)"/><rect x="-3.5" y="-3" width="7" height="6" fill="#d9d9d9" stroke="#b8b8b8" stroke-width="0.8" transform="translate(-28.50 0.00) rotate(270)"/><rect x="-3.5" y="-3" width="7" height="6" fill="#d9d9d9" stroke="#b8b8b8" stroke-width="0.8" transform="translate(-20.15 -20.15) rotate(315)"/><rect x="-3.5" y="-3" width="7" height="6" fill="#d9d9d9" stroke="#b8b8b8" stroke-width="0.8" transform="translate(-0.00 -28.50) rotate(360)"/><rect x="-3.5" y="-3" width="7" height="6" fill="#d9d9d9" stroke="#b8b8b8" stroke-width="0.8" transform="translate(20.15 -20.15) rotate(405)"/><circle r="25.5" fill="#e1e1e1" stroke="#acacac" stroke-width="1"/></svg>
<svg class="a" style="left:805.5px;top:724.5px" width="35.0" height="35.0" viewBox="-17.5 -17.5 35.0 35.0"><circle r="15.5" fill="#e4e4e4" stroke="#acacac" stroke-width="1"/><circle r="11.5" fill="#e1e1e1" stroke="#acacac" stroke-width="1"/><circle cx="-6.75" cy="-11.69" r="1.25" fill="#dadada" stroke="#b0b0b0" stroke-width="0.8"/><circle cx="6.34" cy="-11.92" r="1.25" fill="#dadada" stroke="#b0b0b0" stroke-width="0.8"/><circle cx="13.50" cy="0.00" r="1.25" fill="#dadada" stroke="#b0b0b0" stroke-width="0.8"/><circle cx="-7.15" cy="11.45" r="1.25" fill="#dadada" stroke="#b0b0b0" stroke-width="0.8"/><circle cx="-13.50" cy="0.00" r="1.25" fill="#dadada" stroke="#b0b0b0" stroke-width="0.8"/></svg>
<svg class="a" style="left:791.5px;top:768.5px" width="19.0" height="19.0" viewBox="-9.5 -9.5 19.0 19.0"><circle r="7.5" fill="#e4e4e4" stroke="#acacac" stroke-width="1"/><circle r="4.5" fill="#e1e1e1" stroke="#acacac" stroke-width="1"/></svg>
<svg class="a" style="left:815.5px;top:760.5px" width="35.0" height="35.0" viewBox="-17.5 -17.5 35.0 35.0"><circle r="15.5" fill="#e4e4e4" stroke="#acacac" stroke-width="1"/><circle r="11.5" fill="#e1e1e1" stroke="#acacac" stroke-width="1"/><circle cx="-6.75" cy="-11.69" r="1.25" fill="#dadada" stroke="#b0b0b0" stroke-width="0.8"/><circle cx="6.34" cy="-11.92" r="1.25" fill="#dadada" stroke="#b0b0b0" stroke-width="0.8"/><circle cx="13.50" cy="0.00" r="1.25" fill="#dadada" stroke="#b0b0b0" stroke-width="0.8"/><circle cx="-7.15" cy="11.45" r="1.25" fill="#dadada" stroke="#b0b0b0" stroke-width="0.8"/><circle cx="-13.50" cy="0.00" r="1.25" fill="#dadada" stroke="#b0b0b0" stroke-width="0.8"/></svg>
<div class="b" style="left:803px;top:796px;width:40px;height:20px;background:#f0f0f0;border-color:#a0a0a0"></div>
<div class="a" style="left:803px;top:796px;width:40px;height:20px;display:flex;align-items:center;justify-content:center;font-size:12px;color:#000">CH7</div>
<svg class="a" style="left:914.5px;top:656.5px" width="67.0" height="67.0" viewBox="-33.5 -33.5 67.0 67.0"><circle r="31.5" fill="#e4e4e4" stroke="#acacac" stroke-width="1"/><rect x="-3.5" y="-3" width="7" height="6" fill="#d9d9d9" stroke="#b8b8b8" stroke-width="0.8" transform="translate(28.50 0.00) rotate(90)"/><rect x="-3.5" y="-3" width="7" height="6" fill="#d9d9d9" stroke="#b8b8b8" stroke-width="0.8" transform="translate(20.15 20.15) rotate(135)"/><rect x="-3.5" y="-3" width="7" height="6" fill="#d9d9d9" stroke="#b8b8b8" stroke-width="0.8" transform="translate(0.00 28.50) rotate(180)"/><rect x="-3.5" y="-3" width="7" height="6" fill="#d9d9d9" stroke="#b8b8b8" stroke-width="0.8" transform="translate(-20.15 20.15) rotate(225)"/><rect x="-3.5" y="-3" width="7" height="6" fill="#d9d9d9" stroke="#b8b8b8" stroke-width="0.8" transform="translate(-28.50 0.00) rotate(270)"/><rect x="-3.5" y="-3" width="7" height="6" fill="#d9d9d9" stroke="#b8b8b8" stroke-width="0.8" transform="translate(-20.15 -20.15) rotate(315)"/><rect x="-3.5" y="-3" width="7" height="6" fill="#d9d9d9" stroke="#b8b8b8" stroke-width="0.8" transform="translate(-0.00 -28.50) rotate(360)"/><rect x="-3.5" y="-3" width="7" height="6" fill="#d9d9d9" stroke="#b8b8b8" stroke-width="0.8" transform="translate(20.15 -20.15) rotate(405)"/><circle r="25.5" fill="#e1e1e1" stroke="#acacac" stroke-width="1"/></svg>
<svg class="a" style="left:930.5px;top:724.5px" width="35.0" height="35.0" viewBox="-17.5 -17.5 35.0 35.0"><circle r="15.5" fill="#e4e4e4" stroke="#acacac" stroke-width="1"/><circle r="11.5" fill="#e1e1e1" stroke="#acacac" stroke-width="1"/><circle cx="-6.75" cy="-11.69" r="1.25" fill="#dadada" stroke="#b0b0b0" stroke-width="0.8"/><circle cx="6.34" cy="-11.92" r="1.25" fill="#dadada" stroke="#b0b0b0" stroke-width="0.8"/><circle cx="13.50" cy="0.00" r="1.25" fill="#dadada" stroke="#b0b0b0" stroke-width="0.8"/><circle cx="-7.15" cy="11.45" r="1.25" fill="#dadada" stroke="#b0b0b0" stroke-width="0.8"/><circle cx="-13.50" cy="0.00" r="1.25" fill="#dadada" stroke="#b0b0b0" stroke-width="0.8"/></svg>
<svg class="a" style="left:916.5px;top:768.5px" width="19.0" height="19.0" viewBox="-9.5 -9.5 19.0 19.0"><circle r="7.5" fill="#e4e4e4" stroke="#acacac" stroke-width="1"/><circle r="4.5" fill="#e1e1e1" stroke="#acacac" stroke-width="1"/></svg>
<svg class="a" style="left:940.5px;top:760.5px" width="35.0" height="35.0" viewBox="-17.5 -17.5 35.0 35.0"><circle r="15.5" fill="#e4e4e4" stroke="#acacac" stroke-width="1"/><circle r="11.5" fill="#e1e1e1" stroke="#acacac" stroke-width="1"/><circle cx="-6.75" cy="-11.69" r="1.25" fill="#dadada" stroke="#b0b0b0" stroke-width="0.8"/><circle cx="6.34" cy="-11.92" r="1.25" fill="#dadada" stroke="#b0b0b0" stroke-width="0.8"/><circle cx="13.50" cy="0.00" r="1.25" fill="#dadada" stroke="#b0b0b0" stroke-width="0.8"/><circle cx="-7.15" cy="11.45" r="1.25" fill="#dadada" stroke="#b0b0b0" stroke-width="0.8"/><circle cx="-13.50" cy="0.00" r="1.25" fill="#dadada" stroke="#b0b0b0" stroke-width="0.8"/></svg>
<div class="b" style="left:928px;top:796px;width:40px;height:20px;background:#f0f0f0;border-color:#a0a0a0"></div>
<div class="a" style="left:928px;top:796px;width:40px;height:20px;display:flex;align-items:center;justify-content:center;font-size:12px;color:#000">CH8</div>
<div class="a" style="left:1px;top:818px;width:1336px;height:1px;background:#d8d8d8"></div>
<div class="a" style="left:2px;top:821px;width:99px;height:18px;border:1px solid;border-color:#a0a0a0 #fff #fff #a0a0a0"></div>
<div class="a" style="left:102px;top:821px;width:149px;height:18px;border:1px solid;border-color:#a0a0a0 #fff #fff #a0a0a0"></div>
<div class="a" style="left:252px;top:821px;width:599px;height:18px;border:1px solid;border-color:#a0a0a0 #fff #fff #a0a0a0"></div>
<div class="a" style="left:6px;top:824px;font-size:12px;line-height:15px;color:#000;">Disconnected</div>
<svg class="a" style="left:255px;top:824px;overflow:visible" width="321.0" height="15"><text x="0" y="11.66" font-family="Liberation Sans, sans-serif" font-size="12" fill="#000" textLength="321.00" lengthAdjust="spacingAndGlyphs">¥¥cszmini¥Share¥data¥cap_20230908_002900をインポートしました</text></svg>
<svg class="a" style="left:1325px;top:830px" width="11" height="11"><g fill="#a0a0a0"><rect x="8" y="0" width="2" height="2"/><rect x="4" y="4" width="2" height="2"/><rect x="8" y="4" width="2" height="2"/><rect x="0" y="8" width="2" height="2"/><rect x="4" y="8" width="2" height="2"/><rect x="8" y="8" width="2" height="2"/></g></svg>
</body></html>
